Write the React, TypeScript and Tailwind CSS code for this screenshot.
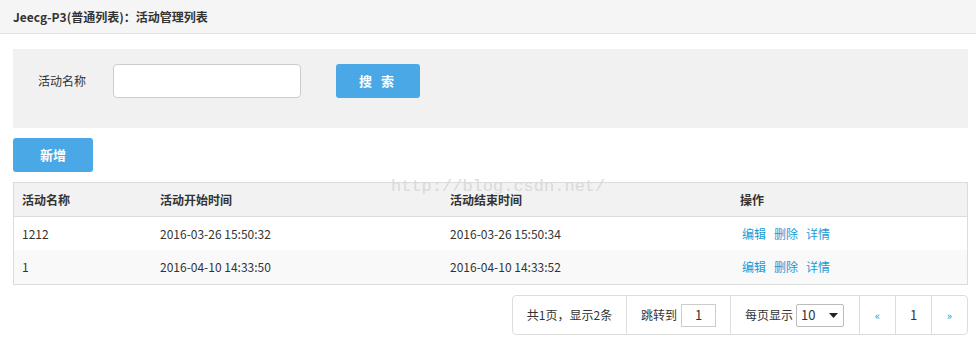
import React from 'react';

const rows = [
  { name: '1212', start: '2016-03-26 15:50:32', end: '2016-03-26 15:50:34', h: 'h-[33px] bg-white' },
  { name: '1', start: '2016-04-10 14:33:50', end: '2016-04-10 14:33:52', h: 'h-[34px] bg-[#f9f9f9]' },
];

const font = { fontFamily: '"Noto Sans CJK SC", "Liberation Sans", sans-serif' };

export default function App() {
  return (
    <div className="w-[976px] h-[346px] bg-white text-[12px] text-[#333] overflow-hidden" style={font}>
      {/* Title bar */}
      <div className="h-[34px] bg-[#f5f5f5] border-b border-[#e0e0e0] flex items-center pl-[13px] font-bold text-[12px] text-[#333]">
        Jeecg-P3(普通列表)：活动管理列表
      </div>

      <div className="pl-[13px] pr-[8px] pt-[15px]">
        {/* Search panel */}
        <div className="h-[79px] bg-[#f1f1f1] flex items-start pt-[15px]">
          <span className="ml-[25px] w-[75px] h-[34px] flex items-center text-[12px] text-[#333]">活动名称</span>
          <input className="w-[188px] h-[34px] bg-white border border-[#ccc] rounded-[4px] outline-none" />
          <button className="ml-[35px] w-[84px] h-[34px] bg-[#4aa8e6] rounded-[3px] text-white font-bold text-[13px] tracking-[3px]">
            搜 索
          </button>
        </div>

        {/* Add button */}
        <button className="mt-[10px] w-[80px] h-[34px] bg-[#4aa8e6] rounded-[3px] text-white font-bold text-[13px]">
          新增
        </button>

        {/* Table */}
        <div className="relative mt-[10px] border border-[#dcdcdc]">
          <div className="grid grid-cols-[138px_290px_290px_1fr] h-[34px] items-center bg-[#f2f2f2] border-b border-[#dcdcdc] font-bold">
            <div className="pl-[8px]">活动名称</div>
            <div className="pl-[8px]">活动开始时间</div>
            <div className="pl-[8px]">活动结束时间</div>
            <div className="pl-[8px]">操作</div>
          </div>
          {rows.map((r, i) => (
            <div key={i} className={`grid grid-cols-[138px_290px_290px_1fr] items-center ${r.h}`}>
              <div className="pl-[8px]">{r.name}</div>
              <div className="pl-[8px]">{r.start}</div>
              <div className="pl-[8px]">{r.end}</div>
              <div className="pl-[10px] flex gap-[8px] text-[#1a9ad6]">
                <a>编辑</a>
                <a>删除</a>
                <a>详情</a>
              </div>
            </div>
          ))}
          <span
            className="absolute left-[377px] top-[-9px] text-[17px] text-[#dadada] pointer-events-none"
            style={{ fontFamily: '"Liberation Mono", monospace' }}
          >
            http://blog.csdn.net/
          </span>
        </div>

        {/* Pagination */}
        <div className="flex justify-end mt-[10px]">
          <div className="flex h-[40px] border border-[#ddd] rounded-[4px] items-stretch text-[12px]">
            <div className="w-[114px] flex items-center justify-center border-r border-[#ddd]">共1页，显示2条</div>
            <div className="w-[104px] flex items-center pl-[14px] border-r border-[#ddd]">
              跳转到
              <span className="ml-[4px] w-[35px] h-[23px] border border-[#ccc] flex items-center justify-center text-[13px]">1</span>
            </div>
            <div className="w-[129px] flex items-center pl-[14px] border-r border-[#ddd]">
              每页显示
              <span className="ml-[3px] w-[48px] h-[23px] border border-[#bbb] rounded-[2px] flex items-center justify-between pl-[4px] pr-[5px] text-[13px]">
                10
                <svg width="9" height="5" viewBox="0 0 9 5">
                  <path d="M0 0h9L4.5 5z" fill="#222" />
                </svg>
              </span>
            </div>
            <div className="w-[36px] flex items-center justify-center border-r border-[#ddd] text-[#1a9ad6] text-[11px]">«</div>
            <div className="w-[36px] flex items-center justify-center border-r border-[#ddd] text-[13px]">1</div>
            <div className="w-[35px] flex items-center justify-center text-[#1a9ad6] text-[11px]">»</div>
          </div>
        </div>
      </div>
    </div>
  );
}
